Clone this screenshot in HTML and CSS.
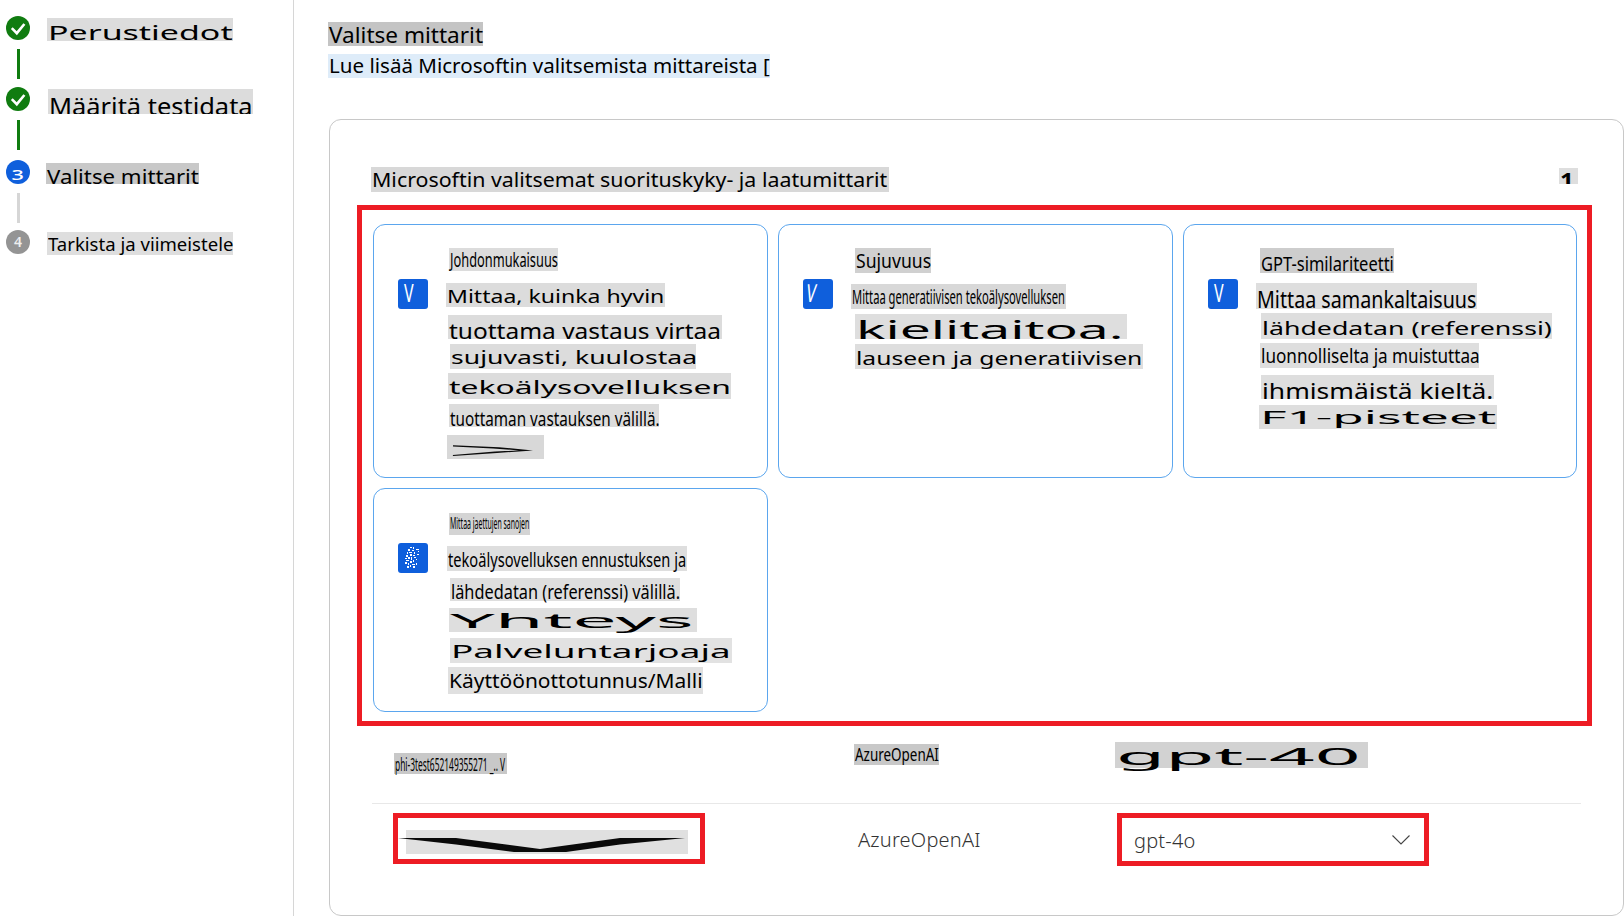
FILE: index.html
```html
<!DOCTYPE html>
<html lang="fi">
<head>
<meta charset="utf-8">
<title>Valitse mittarit</title>
<link rel="stylesheet" href="styles.css">
</head>
<body>
<div class="page">
  <aside class="sidebar">
    <div class="step">
      <span class="dot dot-done"><svg viewBox="0 0 24 24" class="check"><path d="M5.8 12.2l5 5L18.4 8"/></svg></span>
      <div class="chip s-perus"><span>Perustiedot</span></div>
    </div>
    <div class="line line-done line-a"></div>
    <div class="step">
      <span class="dot dot-done"><svg viewBox="0 0 24 24" class="check"><path d="M5.8 12.2l5 5L18.4 8"/></svg></span>
      <div class="chip clip s-maarita"><span>Määritä testidata</span></div>
    </div>
    <div class="line line-done line-b"></div>
    <div class="step">
      <span class="dot dot-now"><span class="num-3">3</span></span>
      <div class="chip s-valitse"><span>Valitse mittarit</span></div>
    </div>
    <div class="line line-todo line-c"></div>
    <div class="step">
      <span class="dot dot-todo">4</span>
      <div class="chip s-tarkista"><span>Tarkista ja viimeistele</span></div>
    </div>
  </aside>

  <main class="main">
    <div class="chip m-title"><span>Valitse mittarit</span></div>
    <div class="chip m-link"><span>Lue lisää Microsoftin valitsemista mittareista [</span></div>

    <section class="panel">
      <div class="panel-head">
        <div class="chip p-head"><span>Microsoftin valitsemat suorituskyky- ja laatumittarit</span></div>
        <div class="chip clip p-count"><span>1</span></div>
      </div>

      <div class="redbox metric-grid">
        <article class="card">
          <span class="box"><span class="v">V</span></span>
          <div class="col">
            <div class="chip a1"><span>Johdonmukaisuus</span></div>
            <div class="chip a2"><span>Mittaa, kuinka hyvin</span></div>
            <div class="chip a3"><span>tuottama vastaus virtaa</span></div>
            <div class="chip a4"><span>sujuvasti, kuulostaa</span></div>
            <div class="chip a5"><span>tekoälysovelluksen</span></div>
            <div class="chip a6"><span>tuottaman vastauksen välillä.</span></div>
            <div class="chip a7"><svg viewBox="0 0 97 24" class="fill-svg"><path d="M6 10.2L52 12.2 86 15.4 50 18 6 21 5.8 20 48 16.6 72 15.4 46 13.4 6 11.4z"/></svg></div>
          </div>
        </article>

        <article class="card">
          <span class="box"><span class="v v-slant">V</span></span>
          <div class="col">
            <div class="chip b1"><span>Sujuvuus</span></div>
            <div class="chip b2"><span>Mittaa generatiivisen tekoälysovelluksen</span></div>
            <div class="chip clip b3"><span>kielitaitoa.</span></div>
            <div class="chip b4"><span>lauseen ja generatiivisen</span></div>
          </div>
        </article>

        <article class="card">
          <span class="box"><span class="v">V</span></span>
          <div class="col">
            <div class="chip c1"><span>GPT-similariteetti</span></div>
            <div class="chip c2"><span>Mittaa samankaltaisuus</span></div>
            <div class="chip c3"><span>lähdedatan (referenssi)</span></div>
            <div class="chip c4"><span>luonnolliselta ja muistuttaa</span></div>
            <div class="chip c5"><span>ihmismäistä kieltä.</span></div>
            <div class="chip c6"><span>F1-pisteet</span></div>
          </div>
        </article>

        <article class="card">
          <span class="box">
            <svg viewBox="0 0 30 30" class="noise"><path d="M12 4h2v1h-2zM15 4h1v2h-1zM10 6h2v2h-2zM14 7h2v1h-2zM18 6h3v1h-3zM9 9h1v2H9zM11 9h3v1h-3zM16 9h1v2h-1zM20 8h1v1h-1zM12 11h2v2h-2zM8 12h2v2H8zM15 12h2v1h-2zM19 11h2v1h-2zM10 14h2v2h-2zM13 14h1v3h-1zM16 14h2v1h-2zM7 15h2v1H7zM8 17h3v1H8zM12 18h2v2h-2zM15 17h1v2h-1zM18 16h1v1h-1zM7 19h2v2H7zM10 20h1v2h-1zM14 21h3v1h-3zM9 23h2v2H9zM12 22h1v2h-1zM15 23h2v2h-2zM18 20h1v2h-1z"/></svg>
          </span>
          <div class="col">
            <div class="chip d1"><span>Mittaa jaettujen sanojen</span></div>
            <div class="chip d2"><span>tekoälysovelluksen ennustuksen ja</span></div>
            <div class="chip d3"><span>lähdedatan (referenssi) välillä.</span></div>
            <div class="chip d4"><span>Yhteys</span></div>
            <div class="chip d5"><span>Palveluntarjoaja</span></div>
            <div class="chip d6"><span>Käyttöönottotunnus/Malli</span></div>
          </div>
        </article>
      </div>

      <div class="conn-row conn-row-first">
        <div class="chip t1"><span>phi-3test652149355271 _.. V</span></div>
        <div class="chip t2"><span>AzureOpenAI</span></div>
        <div class="chip t3"><span>gpt-40</span></div>
      </div>

      <div class="conn-row">
        <div class="redbox red-sm red-left">
          <div class="chip t4"><svg viewBox="0 0 282 24" class="fill-svg"><path d="M-8 8L50 8 134 19 214 8 279 8 214 14.5 160 22 108 22 50 14.5z"/></svg></div>
        </div>
        <div class="plain">AzureOpenAI</div>
        <div class="redbox red-sm red-right">
          <span class="plain">gpt-4o</span>
          <svg viewBox="0 0 18 10" class="chev"><path d="M.5.5L9 9l8.5-8.5"/></svg>
        </div>
      </div>
    </section>
  </main>
</div>
</body>
</html>
```
FILE: styles.css
```css
* { box-sizing: border-box; }
html, body { margin: 0; height: 100%; background: #fff; }
body { font: 16px/22px "Noto Sans", "Open Sans", sans-serif; color: #000; overflow: hidden; }

.page { display: flex; width: 1624px; height: 916px; overflow: hidden; }

/* Stretched-text chip */
.chip {
  display: flex; align-items: center; flex: none;
  width: var(--w); height: var(--h);
  margin: var(--mt, 0) 0 0 var(--ml, 0);
  background: var(--bg, #dcdcdc);
}
.chip > span {
  flex: none; margin-left: 1px; white-space: nowrap; line-height: 22px;
  transform-origin: 0 50%;
  transform: translateY(var(--dy, 0)) scale(var(--sx, 1), var(--sy, 1));
}
.clip { overflow: hidden; }
.fill-svg { display: block; width: 100%; height: 100%; overflow: visible; fill: #0a0a0a; }

/* Sidebar */
.sidebar { flex: none; width: 294px; height: 100%; padding: 16px 0 0 6px; border-right: 1px solid #d6d6d6; }
.step { display: flex; height: 24px; }
.dot {
  flex: none; display: flex; align-items: center; justify-content: center;
  width: 24px; height: 24px; border-radius: 50%; color: #fff;
}
.dot-done { background: #107c10; }
.dot-now { background: #0f5fdc; }
.dot-todo { background: #949494; font-size: 14px; font-weight: 600; color: #eee; }
.check { width: 24px; height: 24px; fill: none; stroke: #fff; stroke-width: 2.6; }
.num-3 { display: block; font-weight: 500; transform: translateY(3px) scale(1.35, .85); }
.line { width: 3px; height: 30px; margin-left: 11px; }
.line-done { background: #107c10; }
.line-todo { background: #d6d6d6; }
.line-a { margin-top: 9px; margin-bottom: 8px; }
.line-b { margin-top: 9px; margin-bottom: 10px; }
.line-c { margin-top: 9px; margin-bottom: 7px; }

.s-perus    { --ml: 17px; --mt: 2px; --w: 186px; --h: 23px; --sx: 2.12; --sy: 1.3;  --dy: 2px; }
.s-maarita  { --ml: 18px; --mt: 2px; --w: 205px; --h: 25px; --sx: 1.59; --sy: 1.5;  --dy: 4px; }
.s-valitse  { --ml: 16px; --mt: 3px; --w: 153px; --h: 21px; --sx: 1.39; --sy: 1.3;  --dy: 2px; --bg: #c8c8c8; }
.s-tarkista { --ml: 17px; --mt: 2px; --w: 186px; --h: 23px; --sx: 1.16; --sy: 1.15; --bg: #dedede; }

/* Main */
.main { flex: none; width: 1330px; padding: 22px 0 0 34px; }
.m-title { --w: 155px; --h: 24px; --sx: 1.41; --sy: 1.35; --dy: 1px; --bg: #c4c4c4; }
.m-link  { --mt: 8px; --w: 442px; --h: 24px; --sx: 1.285; --sy: 1.3; --dy: -1px; --bg: #deecf9; }

.panel {
  width: 1295px; height: 797px; margin: 41px 0 0 1px; padding-top: 47px;
  border: 1px solid #c8c8c8; border-radius: 12px;
}
.panel-head { display: flex; justify-content: space-between; width: 1207px; margin-left: 41px; }
.p-head  { --w: 518px; --h: 25px; --sx: 1.335; --sy: 1.3; --dy: -1px; --bg: #d8d8d8; }
.p-count { --mt: 1px; --w: 19px; --h: 16px; --sx: 1.5; --sy: 1.3; --dy: 4px; --bg: #dedede; font-weight: 700; }

.redbox { border: 5px solid #ed1c24; }
.metric-grid {
  display: grid; grid-template-columns: 395px 395px 394px; grid-template-rows: 254px 224px; gap: 10px;
  width: 1235px; height: 521px; margin: 13px 0 0 27px; padding: 14px 0 0 11px;
}
.card {
  display: flex; padding: 23px 0 0 24px;
  border: 1px solid #5ba6ee; border-radius: 12px;
}
.box {
  flex: none; display: block; width: 30px; height: 30px; margin: 31px 18px 0 0;
  background: #0f5fdc; border-radius: 3px; color: #fff;
}
.v { display: block; margin-left: 6px; font-size: 16px; line-height: 22px; font-weight: 400; transform-origin: 0 0; transform: translateY(-3px) scale(1, 1.55); }
.v-slant { transform: translateY(-3px) skewX(-8deg) scale(1, 1.55); }
.noise { display: block; width: 30px; height: 30px; fill: #fff; }
.col { flex: 1; min-width: 0; }

.a1 { --ml: 3px;            --w: 109px; --h: 23px; --sx: .80;  --sy: 1.3;  --dy: -1px; }
.a2 {            --mt: 12px; --w: 219px; --h: 24px; --sx: 1.44; --sy: 1.15; --dy: 1px; }
.a3 { --ml: 2px; --mt: 8px;  --w: 274px; --h: 24px; --sx: 1.53; --sy: 1.35; --dy: 4px; }
.a4 { --ml: 4px; --mt: 5px;  --w: 246px; --h: 25px; --sx: 1.66; --sy: 1.15; }
.a5 { --ml: 2px; --mt: 4px;  --w: 283px; --h: 26px; --sx: 1.99; --sy: 1.15; --dy: 1px; }
.a6 { --ml: 3px; --mt: 5px;  --w: 210px; --h: 23px; --sx: .955; --sy: 1.25; --dy: 2px; }
.a7 { --ml: 1px; --mt: 8px;  --w: 97px;  --h: 24px; --bg: #d8d8d8; }

.b1 { --ml: 4px;            --w: 76px;  --h: 25px; --sx: 1.10; --sy: 1.2;  --bg: #d0d0d0; }
.b2 {            --mt: 11px; --w: 215px; --h: 25px; --sx: .70;  --sy: 1.3;  --dy: -1px; --bg: #d8d8d8; }
.b3 { --ml: 4px; --mt: 5px;  --w: 272px; --h: 25px; --sx: 3.45; --sy: 1.6;  --dy: 2.5px; --bg: #dedede; }
.b4 { --ml: 4px; --mt: 5px;  --w: 288px; --h: 25px; --sx: 1.54; --sy: 1.1;  --dy: 1px; --bg: #dedede; }

.c1 { --ml: 4px;            --w: 134px; --h: 25px; --sx: 1.03; --sy: 1.3;  --dy: 2px; --bg: #cdcdcd; }
.c2 {            --mt: 10px; --w: 221px; --h: 26px; --sx: 1.23; --sy: 1.45; --dy: 3px; --bg: #dedede; }
.c3 { --ml: 5px; --mt: 4px;  --w: 291px; --h: 26px; --sx: 1.67; --sy: 1.15; --dy: 2px; --bg: #dedede; }
.c4 { --ml: 4px; --mt: 4px;  --w: 219px; --h: 25px; --sx: 1.07; --sy: 1.2;  --bg: #dedede; }
.c5 { --ml: 5px; --mt: 7px;  --w: 233px; --h: 24px; --sx: 1.65; --sy: 1.35; --dy: 3.5px; --bg: #dedede; }
.c6 { --ml: 3px; --mt: 6px;  --w: 238px; --h: 24px; --sx: 3.2;  --sy: 1.08; --dy: 1px; --bg: #dedede; }

.d1 { --ml: 3px; --mt: 1px;  --w: 81px;  --h: 22px; --sx: .435; --sy: 1.0;  --dy: -1px; --bg: #d4d4d4; }
.d2 { --ml: 1px; --mt: 11px; --w: 240px; --h: 25px; --sx: .915; --sy: 1.25; --bg: #dedede; }
.d3 { --ml: 4px; --mt: 7px;  --w: 230px; --h: 23px; --sx: 1.02; --sy: 1.25; --dy: 1px; --bg: #dedede; }
.d4 { --ml: 3px; --mt: 7px;  --w: 248px; --h: 24px; --sx: 4.95; --sy: 1.2;  --dy: 1px; --bg: #dedede; }
.d5 { --ml: 4px; --mt: 6px;  --w: 282px; --h: 25px; --sx: 2.31; --sy: 1.15; --bg: #e2e2e2; }
.d6 { --ml: 2px; --mt: 4px;  --w: 255px; --h: 27px; --sx: 1.31; --sy: 1.2;  --bg: #e0e0e0; }

/* Connection rows */
.conn-row {
  display: grid; grid-template-columns: 460px 261px 1fr; align-items: start;
  width: 1209px; margin-left: 42px; padding-left: 22px;
}
.conn-row-first { height: 78px; border-bottom: 1px solid #e8e8e8; }
.t1 { --mt: 27px; --w: 113px; --h: 21px; --sx: .525; --sy: 1.1;  --bg: #c8c8c8; }
.t2 { --mt: 18px; --w: 85px;  --h: 21px; --sx: .84;  --sy: 1.15; --dy: -1px; --bg: #c8c8c8; }
.t3 { --mt: 16px; --w: 253px; --h: 26px; --sx: 5.0;  --sy: 1.45; --dy: 1px; --bg: #d2d2d2; }

.red-sm { width: 312px; margin-top: 9px; }
.red-left { height: 51px; margin-left: -1px; padding: 12px 0 0 8px; }
.red-right {
  display: flex; align-items: center; justify-content: space-between;
  height: 53px; margin-left: 2px; padding: 3px 14px 0 12px;
}
.t4 { --w: 282px; --h: 24px; --bg: #e0e0e0; }
.plain { display: block; margin: 23px 0 0 4px; font-size: 20px; line-height: 26px; font-weight: 300; letter-spacing: .2px; color: #333; }
.red-right .plain { margin: 0; }
.chev { flex: none; width: 18px; height: 10px; margin-top: -2px; fill: none; stroke: #444; stroke-width: 1.1; }
```
